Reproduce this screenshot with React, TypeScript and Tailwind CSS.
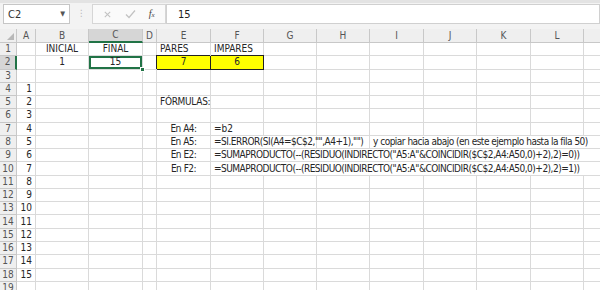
import React from "react";

type Cell = { t: string; span?: number; al?: "l" | "c" | "r"; cls?: string };

const cols = ["A", "B", "C", "D", "E", "F", "G", "H", "I", "J", "K", "L", "M"];
const gridCols = "grid grid-cols-[17px_19px_53px_54px_14px_54px_53px_53px_53px_54px_53px_54px_53px_60px]";

const spanCls: Record<number, string> = {
  1: "",
  2: "col-span-2",
  3: "col-span-3",
  5: "col-span-5",
  8: "col-span-8",
};

const alCls = { l: "justify-start pl-[3px]", c: "justify-center", r: "justify-end pr-[3px]" };

const tight = "tracking-[-0.5px]";

const rows: Record<number, Record<number, Cell>> = {
  1: { 1: { t: "INICIAL", al: "c" }, 2: { t: "FINAL", al: "c" }, 4: { t: "PARES" }, 5: { t: "IMPARES" } },
  2: {
    1: { t: "1", al: "c" },
    2: { t: "15", al: "c", cls: "shadow-[inset_0_0_0_2px_#217346] relative" },
    4: { t: "7", al: "c", cls: "bg-[#ffff00] border-r-[#222] border-b-[#222] shadow-[-1px_-1px_0_#222]" },
    5: { t: "6", al: "c", cls: "bg-[#ffff00] border-r-[#222] border-b-[#222] shadow-[0_-1px_0_#222]" },
  },
  5: { 4: { t: "FÓRMULAS:", cls: "tracking-[-0.3px]" } },
  7: { 4: { t: "En A4:", al: "c", cls: tight }, 5: { t: "=b2" } },
  8: {
    4: { t: "En A5:", al: "c", cls: tight },
    5: { t: '=SI.ERROR(SI(A4=$C$2,"",A4+1),"")', span: 2, cls: tight },
    8: { t: "y copiar hacia abajo (en este ejemplo hasta la fila 50)", span: 5, cls: tight },
  },
  9: {
    4: { t: "En E2:", al: "c", cls: tight },
    5: { t: '=SUMAPRODUCTO(--(RESIDUO(INDIRECTO("A5:A"&COINCIDIR($C$2,A4:A50,0)+2),2)=0))', span: 8, cls: tight },
  },
  10: {
    4: { t: "En F2:", al: "c", cls: tight },
    5: { t: '=SUMAPRODUCTO(--(RESIDUO(INDIRECTO("A5:A"&COINCIDIR($C$2,A4:A50,0)+2),2)=1))', span: 8, cls: tight },
  },
};

function Row({ n }: { n: number }) {
  const data = rows[n] || {};
  const colA = n >= 4 && n <= 18 ? String(n - 3) : "";
  const out: React.ReactNode[] = [];
  for (let i = 0; i < cols.length; ) {
    let c = data[i];
    if (i === 0 && colA) c = { t: colA, al: "r" };
    const span = c?.span ?? 1;
    out.push(
      <div
        key={i}
        className={`flex items-center whitespace-nowrap overflow-visible border-r border-b border-[#dadada] ${spanCls[span]} ${alCls[c?.al ?? "l"]} ${c?.cls ?? ""}`}
      >
        {c?.t}
        {n === 2 && i === 2 && (
          <span className="absolute right-[-3px] bottom-[-3px] w-[5px] h-[5px] bg-[#217346] border border-white" />
        )}
      </div>
    );
    i += span;
  }
  return (
    <div className={`${gridCols} h-[13.28px]`}>
      <div
        className={`flex items-center justify-center border-r border-b border-[#c8c8c8] text-[#555] ${
          n === 2 ? "bg-[#d6d6d6] border-r-2 border-r-[#217346]" : "bg-[#efefef]"
        }`}
      >
        {n}
      </div>
      {out}
    </div>
  );
}

export default function App() {
  return (
    <div className="w-[600px] h-[290px] overflow-hidden bg-white text-[#262626] text-[10px] leading-none font-['Liberation_Sans_Narrow','DejaVu_Sans_Condensed','Liberation_Sans',sans-serif]">
      {/* formula bar */}
      <div className="h-[29px] bg-[#f3f3f3] border-t-[3px] border-[#e3e3e3] flex items-start pt-[1px] pl-[3px]">
        <div className="w-[67px] h-[20px] bg-white border border-[#c6c6c6] flex items-center justify-between px-[4px] text-[11px] text-[#333]">
          <span>C2</span>
          <span className="text-[7px] text-[#555]">▼</span>
        </div>
        <div className="w-[22px] flex justify-center pt-[5px] text-[#b5b5b5] text-[9px]">⋮</div>
        <div className="w-[74px] h-[20px] bg-[#fafafa] border border-[#d6d6d6] flex items-center justify-around px-[4px]">
          <svg width="9" height="9" viewBox="0 0 10 10" stroke="#c2c2c2" strokeWidth="1.2">
            <path d="M2 2 L8 8 M8 2 L2 8" />
          </svg>
          <svg width="11" height="10" viewBox="0 0 11 10" stroke="#c2c2c2" strokeWidth="1.2" fill="none">
            <path d="M1 5.5 L4 8.5 L10 1.5" />
          </svg>
          <span className="italic text-[#444] text-[10px] font-['Liberation_Serif',serif]">
            f<span className="text-[7px]">x</span>
          </span>
        </div>
        <div className="flex-1 h-[20px] bg-white border border-[#d0d0d0] flex items-center pl-[11px] text-[11px] text-[#222]">
          15
        </div>
      </div>
      {/* column headers */}
      <div className={`${gridCols} h-[14px] bg-[#efefef] text-[#555]`}>
        <div className="border-r border-b border-[#c8c8c8] flex items-end justify-end p-[2px]">
          <span className="w-0 h-0 border-l-[7px] border-l-transparent border-b-[7px] border-b-[#b8b8b8]" />
        </div>
        {cols.map((c) => (
          <div
            key={c}
            className={`flex items-center justify-center border-r border-[#c8c8c8] ${
              c === "C" ? "bg-[#d6d6d6] border-b-2 border-b-[#217346]" : "border-b"
            }`}
          >
            {c}
          </div>
        ))}
      </div>
      {Array.from({ length: 19 }, (_, i) => (
        <Row key={i} n={i + 1} />
      ))}
    </div>
  );
}
